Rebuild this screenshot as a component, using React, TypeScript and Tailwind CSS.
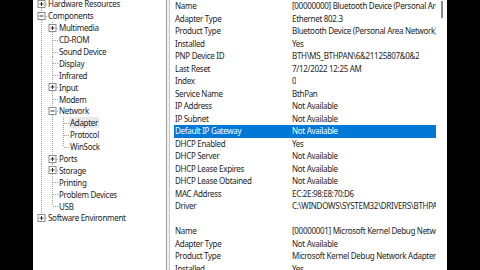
import React from 'react';

type Cell = 'none' | 'line' | 'tee' | 'end' | 'plus' | 'minus' | 'plusEnd';

const treeRows: { cells: Cell[]; label: string; selected?: boolean }[] = [
  { cells: ['plus'], label: 'Hardware Resources' },
  { cells: ['minus'], label: 'Components' },
  { cells: ['line', 'plus'], label: 'Multimedia' },
  { cells: ['line', 'tee'], label: 'CD-ROM' },
  { cells: ['line', 'tee'], label: 'Sound Device' },
  { cells: ['line', 'tee'], label: 'Display' },
  { cells: ['line', 'tee'], label: 'Infrared' },
  { cells: ['line', 'plus'], label: 'Input' },
  { cells: ['line', 'tee'], label: 'Modem' },
  { cells: ['line', 'minus'], label: 'Network' },
  { cells: ['line', 'line', 'tee'], label: 'Adapter', selected: true },
  { cells: ['line', 'line', 'tee'], label: 'Protocol' },
  { cells: ['line', 'line', 'end'], label: 'WinSock' },
  { cells: ['line', 'plus'], label: 'Ports' },
  { cells: ['line', 'plus'], label: 'Storage' },
  { cells: ['line', 'tee'], label: 'Printing' },
  { cells: ['line', 'tee'], label: 'Problem Devices' },
  { cells: ['line', 'end'], label: 'USB' },
  { cells: ['plusEnd'], label: 'Software Environment' },
];

const details: [string, string][] = [
  ['Name', '[00000000] Bluetooth Device (Personal Area Network)'],
  ['Adapter Type', 'Ethernet 802.3'],
  ['Product Type', 'Bluetooth Device (Personal Area Network)'],
  ['Installed', 'Yes'],
  ['PNP Device ID', 'BTH\\MS_BTHPAN\\6&21125807&0&2'],
  ['Last Reset', '7/12/2022 12:25 AM'],
  ['Index', '0'],
  ['Service Name', 'BthPan'],
  ['IP Address', 'Not Available'],
  ['IP Subnet', 'Not Available'],
  ['Default IP Gateway', 'Not Available'],
  ['DHCP Enabled', 'Yes'],
  ['DHCP Server', 'Not Available'],
  ['DHCP Lease Expires', 'Not Available'],
  ['DHCP Lease Obtained', 'Not Available'],
  ['MAC Address', 'EC:2E:98:E8:70:D6'],
  ['Driver', 'C:\\WINDOWS\\SYSTEM32\\DRIVERS\\BTHPAN.SYS'],
  ['', ''],
  ['Name', '[00000001] Microsoft Kernel Debug Network Adapter'],
  ['Adapter Type', 'Not Available'],
  ['Product Type', 'Microsoft Kernel Debug Network Adapter'],
  ['Installed', 'Yes'],
];

function TreeCell({ kind }: { kind: Cell }) {
  const dots = { stroke: '#a0a0a0', strokeWidth: 1, strokeDasharray: '1 1' };
  const hasBox = kind === 'plus' || kind === 'minus' || kind === 'plusEnd';
  return (
    <svg width="11" height="12" viewBox="0 0 11 12" className="shrink-0">
      {(kind === 'line' || kind === 'tee' || kind === 'plus' || kind === 'minus') && (
        <line x1="5.5" y1="0" x2="5.5" y2="12" {...dots} />
      )}
      {(kind === 'end' || kind === 'plusEnd') && <line x1="5.5" y1="0" x2="5.5" y2="6" {...dots} />}
      {(kind === 'tee' || kind === 'end' || hasBox) && <line x1="6" y1="6.5" x2="11" y2="6.5" {...dots} />}
      {hasBox && (
        <>
          <rect x="2" y="2.5" width="7" height="7" fill="#fff" stroke="#8c8c8c" strokeWidth="1" />
          <line x1="3.5" y1="6" x2="7.5" y2="6" stroke="#333" strokeWidth="1" />
          {kind !== 'minus' && <line x1="5.5" y1="4" x2="5.5" y2="8" stroke="#333" strokeWidth="1" />}
        </>
      )}
    </svg>
  );
}

export default function App() {
  return (
    <div
      className="flex h-[270px] w-[480px] overflow-hidden bg-black text-[8px] tracking-[-0.3px] text-[#1e1e1e]"
      style={{ fontFamily: '"Noto Sans", "Open Sans", sans-serif' }}
    >
      <div className="w-[33px] shrink-0" />

      {/* category tree */}
      <div className="w-[133px] shrink-0 overflow-hidden bg-white">
        <div className="-mt-[2px] pl-[3px]">
          {treeRows.map((row, i) => (
            <div key={i} className="flex h-[11.9px] items-center whitespace-nowrap">
              {row.cells.map((c, j) => (
                <TreeCell key={j} kind={c} />
              ))}
              <span className={`px-[1px] leading-[11px] ${row.selected ? 'bg-[#e8e8e8]' : ''}`}>
                {row.label}
              </span>
            </div>
          ))}
        </div>
      </div>

      {/* splitter */}
      <div className="flex w-[4px] shrink-0 bg-[#f0f0f0]">
        <div className="w-px bg-[#a0a0a0]" />
        <div className="flex-1" />
        <div className="w-px bg-[#c8c8c8]" />
      </div>

      {/* details list */}
      <div className="w-[267px] shrink-0 overflow-hidden bg-white">
        {details.map(([k, v], i) => {
          const sel = k === 'Default IP Gateway';
          return (
            <div
              key={i}
              className={`ml-[4px] mr-[1px] flex h-[12.5px] items-center whitespace-nowrap leading-[12.5px] ${
                sel ? 'bg-[#0078d7] text-white' : ''
              }`}
            >
              <span className="w-[118px] shrink-0 pl-[1px]">{k}</span>
              <span className="overflow-hidden">{v}</span>
            </div>
          );
        })}
      </div>

      {/* scrollbar */}
      <div className="flex w-[10px] shrink-0 justify-center bg-white pt-[1px]">
        <div className="h-[17px] w-[2px] bg-[#8a8a8a]" />
      </div>
    </div>
  );
}
